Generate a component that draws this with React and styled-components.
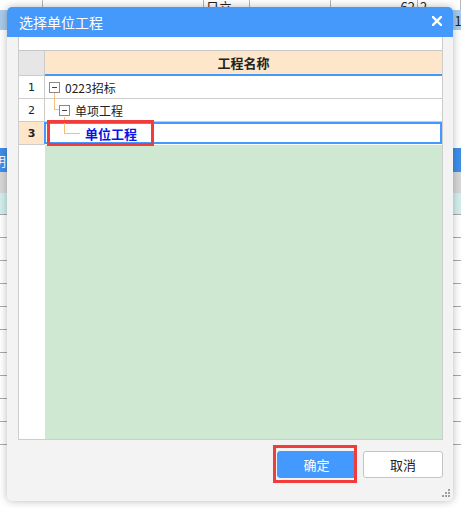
import React from 'react';
import styled, { createGlobalStyle } from 'styled-components';

const Global = createGlobalStyle`
  html, body {
    margin: 0;
    padding: 0;
    background: #ffffff;
  }
  body {
    font-family: 'Noto Sans CJK SC', 'Liberation Sans', sans-serif;
    width: 461px;
    height: 508px;
    overflow: hidden;
    position: relative;
  }
`;

// ---- spreadsheet behind the dialog ----
const Sheet = styled.div`
  display: flex;
  flex-direction: column;
  width: 461px;
`;

const TopRow = styled.div`
  display: grid;
  grid-template-columns: 43px 161px 46px 81px 87px 1fr;
  height: 10px;
  overflow: hidden;
`;

const TopCell = styled.div`
  border-right: 1px solid #b5b5b5;
  display: flex;
  align-items: flex-end;
  justify-content: ${(p) => (p.right ? 'flex-end' : 'flex-start')};
  padding: 0 2px 4px 2px;
  font-size: 13px;
  line-height: 14px;
  color: #222;
`;

const SheetBand = styled.div`
  height: ${(p) => p.h}px;
  background: ${(p) => p.bg || '#ffffff'};
  border-bottom: ${(p) => (p.line ? '1px solid #a9a9a9' : 'none')};
  display: flex;
  align-items: center;
  justify-content: ${(p) => (p.end ? 'flex-end' : 'flex-start')};
  font-size: 13px;
  color: ${(p) => p.color || '#222'};
  overflow: hidden;
  box-sizing: border-box;
`;

const BandText = styled.span`
  margin-left: ${(p) => p.ml || 0}px;
  margin-right: ${(p) => p.mr || 0}px;
`;

// ---- dialog ----
const Dialog = styled.div`
  position: absolute;
  left: 7px;
  top: 7px;
  width: 446px;
  height: 494px;
  display: flex;
  flex-direction: column;
  border-radius: 5px;
  overflow: hidden;
  background: #f3f3f3;
  box-shadow: 0 0 9px rgba(0, 0, 0, 0.28);
`;

const TitleBar = styled.div`
  height: 30px;
  flex: none;
  background: #4599fb;
  display: flex;
  align-items: center;
  justify-content: space-between;
  padding: 0 11px 0 12px;
  color: #ffffff;
  font-size: 14px;
`;

const CloseBtn = styled.div`
  width: 10px;
  height: 10px;
  display: flex;
  margin-top: -2px;
`;

const Body = styled.div`
  flex: 1;
  display: flex;
  flex-direction: column;
  padding: 0 10px 0 11px;
  position: relative;
`;

const Panel = styled.div`
  height: 389px;
  background: #ffffff;
  border: 1px solid #cdcdcd;
  border-top: none;
  padding-top: 13px;
  display: flex;
  flex-direction: column;
`;

const Row = styled.div`
  display: grid;
  grid-template-columns: 26px 1fr;
  height: ${(p) => p.h || 23}px;
  flex: none;
  border-top: ${(p) => (p.head ? '1px solid #c6c6c6' : 'none')};
`;

const NumCell = styled.div`
  border-right: 1px solid #cccccc;
  border-bottom: 1px solid #cccccc;
  background: ${(p) => (p.head ? '#e6e6e6' : p.active ? '#fde6ca' : '#ffffff')};
  display: flex;
  align-items: center;
  justify-content: center;
  font-family: 'DejaVu Sans', sans-serif;
  font-size: 11px;
  font-weight: ${(p) => (p.active ? 700 : 400)};
  color: #222;
`;

const HeadCell = styled.div`
  background: #fde6ca;
  border-bottom: 2px solid #4499ff;
  display: flex;
  align-items: center;
  justify-content: center;
  font-size: 13px;
  font-weight: 700;
  color: #222;
`;

const NameCell = styled.div`
  position: relative;
  display: flex;
  align-items: center;
  padding-left: ${(p) => p.indent}px;
  border-bottom: 1px solid ${(p) => (p.selected ? 'transparent' : '#cccccc')};
  box-shadow: ${(p) => (p.selected ? 'inset 0 0 0 2px #4499ff' : 'none')};
  margin-left: ${(p) => (p.selected ? -1 : 0)}px;
  font-size: ${(p) => (p.selected ? 13 : 12)}px;
  font-weight: ${(p) => (p.selected ? 700 : 400)};
  color: ${(p) => (p.selected ? '#0a14e6' : '#222')};
`;

const Toggle = styled.span`
  width: 9px;
  height: 9px;
  border: 1px solid #8a8a8a;
  background: #fff;
  display: flex;
  align-items: center;
  justify-content: center;
  margin-right: 5px;
  flex: none;
  position: relative;
  z-index: 1;
  &::after {
    content: '';
    width: 5px;
    height: 1px;
    background: #444;
  }
`;

const Elbow = styled.span`
  position: absolute;
  left: ${(p) => p.x}px;
  top: ${(p) => p.y}px;
  width: ${(p) => p.w}px;
  height: ${(p) => p.h}px;
  border-left: 1px solid #f8bf72;
  border-bottom: 1px solid #f8bf72;
`;

const Mark = styled.span`
  position: absolute;
  left: 3px;
  top: -2px;
  width: 101px;
  height: 20px;
  border: 3px solid #f13c3c;
  pointer-events: none;
`;

const Filler = styled.div`
  flex: 1;
  display: grid;
  grid-template-columns: 26px 1fr;
`;

const FillNum = styled.div`
  background: #ffffff;
`;

const FillArea = styled.div`
  background: #cfe8d1;
`;

const Footer = styled.div`
  flex: 1;
  display: flex;
  justify-content: flex-end;
  align-items: flex-start;
  gap: 7px;
  padding-top: 11px;
  position: relative;
`;

const Button = styled.button`
  position: relative;
  width: ${(p) => (p.primary ? 79 : 80)}px;
  height: 27px;
  border-radius: 3px;
  border: 1px solid ${(p) => (p.primary ? '#4499ff' : '#c4c4c4')};
  background: ${(p) => (p.primary ? '#4499ff' : '#ffffff')};
  color: ${(p) => (p.primary ? '#ffffff' : '#222')};
  font-family: 'Noto Sans CJK SC', sans-serif;
  font-size: 13px;
  padding: 0;
  ${(p) =>
    p.marked &&
    `&::after {
      content: '';
      position: absolute;
      left: -5px;
      top: -7px;
      right: -2px;
      bottom: -6px;
      border: 3px solid #f13c3c;
    }`}
`;

const Grip = styled.svg`
  position: absolute;
  right: -7px;
  bottom: 4px;
`;

const nodes = [
  { n: 1, label: '0223招标', indent: 4 },
  { n: 2, label: '单项工程', indent: 14, elbow: { x: 9, y: -6, w: 4, h: 16 } },
  { n: 3, label: '单位工程', indent: 41, selected: true, elbow: { x: 20, y: -5, w: 15, h: 16 } },
];

export default function App() {
  return (
    <>
      <Global />
      <Sheet>
        <TopRow>
          <TopCell />
          <TopCell />
          <TopCell>日立</TopCell>
          <TopCell />
          <TopCell right>62</TopCell>
          <TopCell>2</TopCell>
        </TopRow>
        <SheetBand h={20} bg="#a9cbec" end>
          <BandText mr={-8}>15</BandText>
        </SheetBand>
        <SheetBand h={118} />
        <SheetBand h={24} bg="#3e8fea" color="#fff">
          <BandText ml={-7}>明</BandText>
        </SheetBand>
        <SheetBand h={21} bg="#d7d7d7" />
        <SheetBand h={22} bg="#d3eeee" line />
        {Array.from({ length: 10 }).map((_, i) => (
          <SheetBand key={i} h={23} line />
        ))}
      </Sheet>

      <Dialog>
        <TitleBar>
          <span>选择单位工程</span>
          <CloseBtn>
            <svg width="10" height="10" viewBox="0 0 10 10">
              <path d="M1 1 L9 9 M9 1 L1 9" stroke="#fff" strokeWidth="2.4" strokeLinecap="square" />
            </svg>
          </CloseBtn>
        </TitleBar>
        <Body>
          <Panel>
            <Row head h={25}>
              <NumCell head />
              <HeadCell>工程名称</HeadCell>
            </Row>
            {nodes.map((nd) => (
              <Row key={nd.n}>
                <NumCell active={nd.selected}>{nd.n}</NumCell>
                <NameCell indent={nd.indent} selected={nd.selected}>
                  {nd.elbow && <Elbow {...nd.elbow} />}
                  {!nd.selected && <Toggle />}
                  {nd.label}
                  {nd.selected && <Mark />}
                </NameCell>
              </Row>
            ))}
            <Filler>
              <FillNum />
              <FillArea />
            </Filler>
          </Panel>
          <Footer>
            <Button primary marked>确定</Button>
            <Button>取消</Button>
            <Grip width="8" height="8" viewBox="0 0 8 8">
              {[[6, 0], [3, 3], [6, 3], [0, 6], [3, 6], [6, 6]].map(([x, y], i) => (
                <rect key={i} x={x} y={y} width="2" height="2" fill="#a0a0a0" />
              ))}
            </Grip>
          </Footer>
        </Body>
      </Dialog>
    </>
  );
}
